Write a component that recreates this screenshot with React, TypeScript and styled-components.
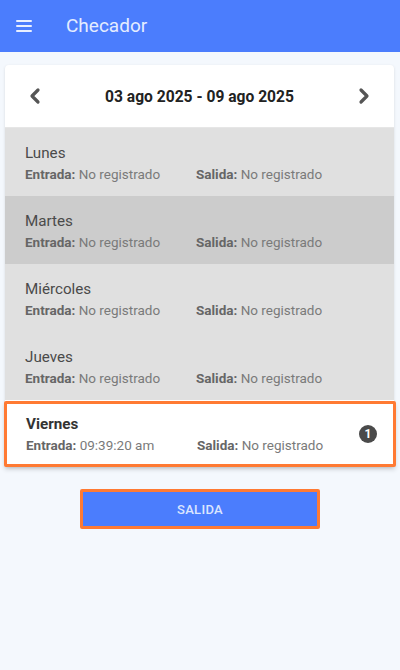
import React from "react";
import styled, { createGlobalStyle } from "styled-components";

const Global = createGlobalStyle`
  html, body { margin: 0; padding: 0; }
  body {
    background: #f4f8fd;
    font-family: Roboto, "Noto Sans", "Liberation Sans", sans-serif;
    width: 400px;
    height: 670px;
    overflow: hidden;
  }
`;

const Page = styled.div`
  width: 400px;
  min-height: 670px;
  background: #f4f8fd;
`;

const TopBar = styled.header`
  height: 52px;
  background: #4b7dfd;
  display: flex;
  align-items: center;
  padding-left: 16px;
  box-sizing: border-box;
`;

const Burger = styled.div`
  width: 16px;
  display: flex;
  flex-direction: column;
  gap: 3px;
  margin-right: 34px;
  span {
    display: block;
    height: 2px;
    background: #e8efff;
    border-radius: 1px;
  }
`;

const Title = styled.h1`
  margin: 0 0 1px;
  font-size: 19px;
  font-weight: 400;
  color: #e4ecff;
`;

const Content = styled.main`
  padding: 13px 6px 0 5px;
`;

const Card = styled.section`
  background: #fff;
  border-radius: 4px;
  box-shadow: 0 1px 3px rgba(0, 0, 0, 0.12);
`;

const WeekNav = styled.div`
  height: 63px;
  display: flex;
  align-items: center;
  justify-content: space-between;
  padding: 0 18px;
  border-bottom: 1px solid #e6e6e6;
  box-sizing: border-box;
`;

const NavBtn = styled.button`
  border: 0;
  background: transparent;
  padding: 0;
  width: 24px;
  height: 24px;
  display: flex;
  align-items: center;
  justify-content: center;
  cursor: pointer;
`;

const WeekLabel = styled.div`
  font-size: 15.6px;
  font-weight: 700;
  color: #222;
  padding-top: 2px;
`;

const DayRow = styled.div<{ $shade?: string; $active?: boolean }>`
  position: relative;
  height: ${(p) => (p.$active ? "66px" : "68px")};
  box-sizing: border-box;
  display: flex;
  align-items: center;
  justify-content: space-between;
  background: ${(p) => p.$shade ?? "#e0e0e0"};
  padding: 2px 19px 0 20px;
  ${(p) =>
    p.$active
      ? `
    background: #fff;
    border: 3px solid #ff7a33;
    margin: 1px -2px 0 -1px;
    padding: 0 16px 0 19px;
    box-shadow: 0 3px 4px rgba(0,0,0,0.12);
    border-radius: 2px;
  `
      : ""}
`;

const DayInfo = styled.div`
  display: flex;
  flex-direction: column;
  gap: 4px;
`;

const DayName = styled.div<{ $active?: boolean }>`
  font-size: 15.2px;
  font-weight: ${(p) => (p.$active ? 700 : 400)};
  color: ${(p) => (p.$active ? "#333" : "#4a4a4a")};
`;

const Times = styled.div`
  display: flex;
  font-size: 13.5px;
  color: #7a7a7a;
`;

const TimeCell = styled.span`
  width: 171px;
  &:last-child { width: auto; }
  b { font-weight: 700; color: #666; }
`;

const Badge = styled.span`
  width: 18px;
  height: 18px;
  border-radius: 50%;
  background: #4a4a4a;
  color: #fff;
  font-size: 12px;
  font-weight: 700;
  display: flex;
  align-items: center;
  justify-content: center;
`;

const Actions = styled.div`
  display: flex;
  justify-content: center;
  padding-top: 22px;
  padding-left: 1px;
`;

const ExitButton = styled.button`
  width: 240px;
  height: 40px;
  box-sizing: border-box;
  border: 3px solid #ff7a33;
  border-radius: 2px;
  background: #4b7dfd;
  color: #dbe5ff;
  font-family: inherit;
  font-size: 13px;
  font-weight: 500;
  letter-spacing: 0.3px;
  cursor: pointer;
`;

const Chevron = ({ dir }: { dir: "left" | "right" }) => (
  <svg width="16" height="18" viewBox="0 0 16 18">
    <path
      d={dir === "left" ? "M11 3 L5 9 L11 15" : "M5 3 L11 9 L5 15"}
      fill="none"
      stroke="#555"
      strokeWidth="3.2"
      strokeLinecap="round"
      strokeLinejoin="round"
    />
  </svg>
);

type Day = { name: string; entrada: string; salida: string; shade?: string; active?: boolean; badge?: number };

const days: Day[] = [
  { name: "Lunes", entrada: "No registrado", salida: "No registrado" },
  { name: "Martes", entrada: "No registrado", salida: "No registrado", shade: "#cccccc" },
  { name: "Miércoles", entrada: "No registrado", salida: "No registrado" },
  { name: "Jueves", entrada: "No registrado", salida: "No registrado" },
  { name: "Viernes", entrada: "09:39:20 am", salida: "No registrado", active: true, badge: 1 },
];

export default function App() {
  return (
    <Page>
      <Global />
      <TopBar>
        <Burger>
          <span />
          <span />
          <span />
        </Burger>
        <Title>Checador</Title>
      </TopBar>
      <Content>
        <Card>
          <WeekNav>
            <NavBtn aria-label="Semana anterior">
              <Chevron dir="left" />
            </NavBtn>
            <WeekLabel>03 ago 2025 - 09 ago 2025</WeekLabel>
            <NavBtn aria-label="Semana siguiente">
              <Chevron dir="right" />
            </NavBtn>
          </WeekNav>
          {days.map((d) => (
            <DayRow key={d.name} $shade={d.shade} $active={d.active}>
              <DayInfo>
                <DayName $active={d.active}>{d.name}</DayName>
                <Times>
                  <TimeCell>
                    <b>Entrada:</b> {d.entrada}
                  </TimeCell>
                  <TimeCell>
                    <b>Salida:</b> {d.salida}
                  </TimeCell>
                </Times>
              </DayInfo>
              {d.badge ? <Badge>{d.badge}</Badge> : null}
            </DayRow>
          ))}
        </Card>
        <Actions>
          <ExitButton>SALIDA</ExitButton>
        </Actions>
      </Content>
    </Page>
  );
}
